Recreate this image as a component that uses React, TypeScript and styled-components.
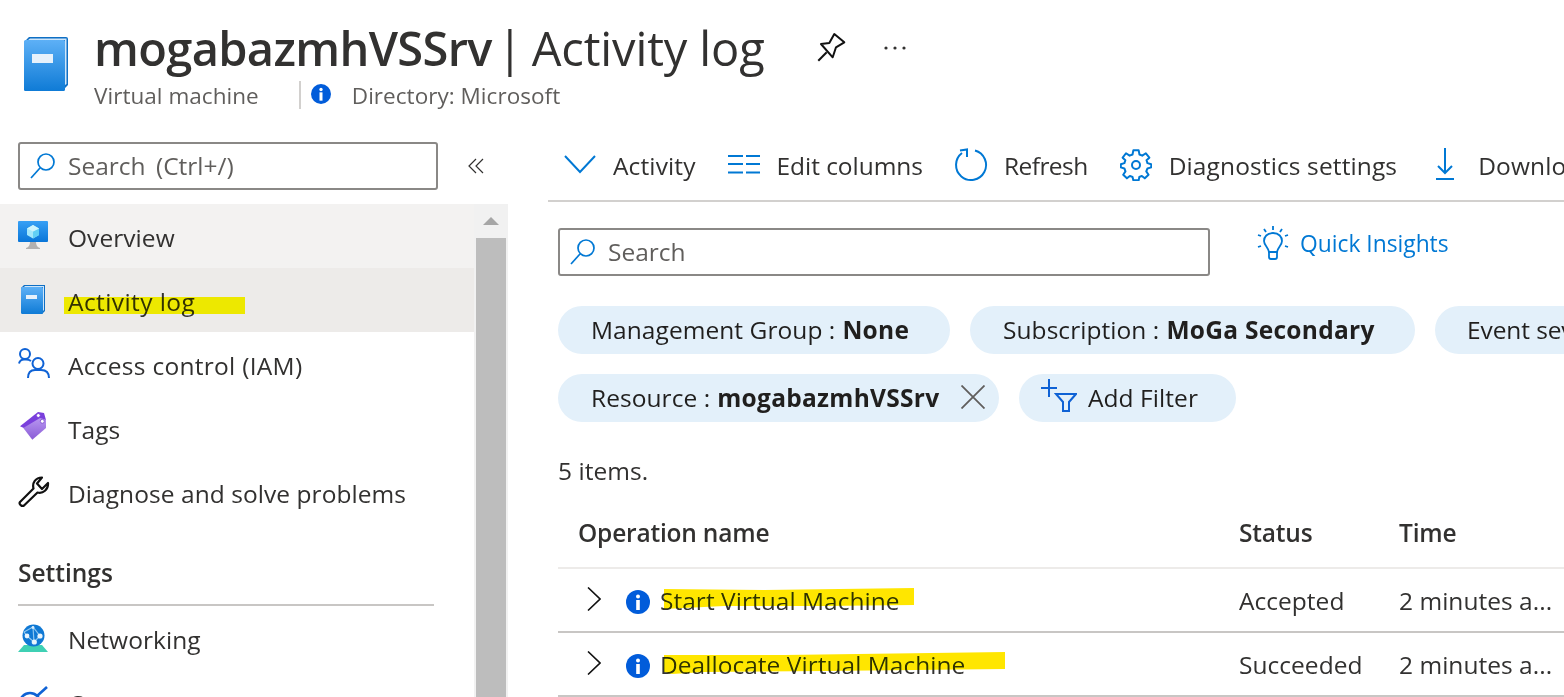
import React from "react";
import styled, { createGlobalStyle } from "styled-components";

const Global = createGlobalStyle`
  html, body { margin: 0; padding: 0; background: #fff; }
  body { font-family: "Open Sans", "Liberation Sans", sans-serif; color: #323130; }
  * { box-sizing: border-box; }
`;

const Page = styled.div`
  width: 1564px; height: 697px; overflow: hidden; background: #fff;
  display: flex; flex-direction: column;
`;
const Header = styled.header`
  height: 142px; flex: none; display: flex; align-items: flex-start;
  padding: 20px 0 0 24px;
`;
const HeaderIconWrap = styled.div`
  width: 44px; height: 54px; margin-top: 17px; flex: none;
`;
const HeaderText = styled.div`
  margin-left: 26px; display: flex; flex-direction: column;
`;
const TitleRow = styled.div`display: flex; align-items: center; height: 56px;`;
const Title = styled.h1`
  margin: 0; font-size: 47px; line-height: 56px; font-weight: 400; color: #323130;
  white-space: nowrap; letter-spacing: -0.12px;
  b { font-weight: 600; letter-spacing: -0.65px; }
`;
const TitleBar = styled.span`margin: 0 -3px 0 -7px;`;
const TitleIcons = styled.div`
  display: flex; align-items: center; margin-left: 53px; gap: 37px;
`;
const SubRow = styled.div`
  display: flex; align-items: center; height: 28px; margin-top: 5px;
  font-size: 22.5px; color: #605e5c; letter-spacing: 0.04px;
`;
const SubDivider = styled.span`
  width: 2px; height: 28px; background: #d2d0ce; margin: 0 10px 0 40px;
`;
const SubInfo = styled.span`
  display: flex; margin: -2px 21px 0 0;
`;
const Main = styled.div`display: flex; flex: 1; min-height: 0;`;
const Sidebar = styled.aside`
  width: 508px; flex: none; margin-right: 40px; display: flex; flex-direction: column;
`;
const SideTop = styled.div`
  height: 62px; flex: none; display: flex; padding-left: 18px;
`;
const SearchBox = styled.div<{ $w: number }>`
  width: ${p => p.$w}px; height: 48px; flex: none; border: 2px solid #8a8886; border-radius: 3px;
  display: flex; align-items: center; padding-left: 9px; gap: 13px;
  font-size: 24.5px; color: #605e5c; letter-spacing: 0;
  word-spacing: 4px;
`;
const SearchLabel = styled.span`margin-top: -2px;`;
const Collapse = styled.div`
  width: 20px; height: 48px; margin-left: 30px; display: flex; align-items: center;
`;
const SideBody = styled.div`display: flex; flex: 1; min-height: 0;`;
const NavList = styled.nav`width: 474px; flex: none; display: flex; flex-direction: column;`;
const NavItem = styled.div<{ $bg?: string }>`
  height: 64px; flex: none; display: flex; align-items: center; padding-left: 18px;
  background: ${p => p.$bg || "transparent"};
  font-size: 24.5px; color: #323130; white-space: nowrap;
`;
const NavIcon = styled.span`width: 32px; height: 32px; flex: none; margin-right: 18px; display: flex;`;
const NavLabel = styled.span<{ $ls?: number }>`
  margin-top: 2px; position: relative; letter-spacing: ${p => p.$ls ?? 0.06}px;
`;
const FlatMark = styled.span`
  position: absolute; left: -4px; top: 12px; width: 181px; height: 17px;
  background: #f0e800; mix-blend-mode: darken;
`;
const SectionTitle = styled.div`
  flex: none; margin: 24px 0 0 18px; width: 416px; height: 58px; border-bottom: 2px solid #c8c6c4;
  font-size: 24.5px; font-weight: 600; color: #323130; line-height: 50px;
`;
const ScrollTrack = styled.div`
  width: 34px; background: #f1f1f1; display: flex; flex-direction: column;
  padding: 0 2px;
`;
const ScrollArrow = styled.div`
  height: 34px; flex: none; display: flex; align-items: center; justify-content: center; padding-top: 2px;
`;
const ScrollThumb = styled.div`flex: 1; background: #bdbdbd;`;
const Content = styled.section`flex: 1; min-width: 0; overflow: hidden; display: flex; flex-direction: column;`;
const Toolbar = styled.div`
  height: 60px; flex: none; display: flex; align-items: flex-start; gap: 32px;
  border-bottom: 2px solid #d2d0ce; padding-left: 16px; white-space: nowrap; overflow: hidden;
`;
const ToolItem = styled.div<{ $ls?: number }>`
  display: flex; align-items: center; height: 48px; gap: 17px; flex: none; padding-bottom: 2px;
  font-size: 24.5px; color: #323130; letter-spacing: ${p => p.$ls ?? 0.12}px;
`;
const ToolIcon = styled.span`width: 32px; height: 32px; display: flex; flex: none;`;
const Inner = styled.div`padding-left: 10px; display: flex; flex-direction: column;`;
const SearchRow = styled.div`display: flex; margin-top: 26px; height: 48px;`;
const Insights = styled.div`
  display: flex; align-items: center; height: 36px; margin-top: -3px; margin-left: 47px; gap: 11px;
  color: #0078d4; font-size: 22.8px; white-space: nowrap;
`;
const PillRow = styled.div<{ $top: number }>`
  display: flex; gap: 20px; margin-top: ${p => p.$top}px; height: 48px;
`;
const Pill = styled.div<{ $w: number; $pad?: number; $ls?: number }>`
  width: ${p => p.$w}px; height: 48px; flex: none; border-radius: 24px; background: #e3f0fa;
  display: flex; align-items: center; padding: 0 0 2px ${p => p.$pad ?? 33}px;
  font-size: 24.5px; color: #201f1e; letter-spacing: ${p => p.$ls ?? 0.06}px; white-space: nowrap; overflow: hidden;
  b { font-weight: 700; margin-left: 7px; letter-spacing: 0.28px; }
`;
const PillClose = styled.span`display: flex; margin-left: auto; margin-right: 14px;`;
const PillIcon = styled.span`display: flex; margin-right: 11px; margin-bottom: 2px;`;
const Count = styled.div`
  margin-top: 32px; height: 34px; line-height: 34px; font-size: 24.5px; color: #323130; letter-spacing: 0.06px;
`;
const Table = styled.div`margin-top: 9px; display: flex; flex-direction: column;`;
const Row = styled.div<{ $h: number; $line: string }>`
  height: ${p => p.$h}px; flex: none; display: grid; grid-template-columns: 661px 160px 1fr;
  align-items: center; border-bottom: 2px solid ${p => p.$line}; padding-left: 20px;
  font-size: 24.5px; color: #323130; letter-spacing: 0.03px; white-space: nowrap;
`;
const HeadCell = styled.div`font-weight: 600; color: #323130; letter-spacing: -0.2px;`;
const OpCell = styled.div`display: flex; align-items: center;`;
const Caret = styled.span`display: flex; margin: -2px 0 0 9px; width: 39px;`;
const OpInfo = styled.span`display: flex; margin: 3px 10px 0 0;`;
const OpName = styled.span`position: relative; display: inline-block;`;
const StrokeMark = styled.svg`
  position: absolute; left: 4px; top: 4px; mix-blend-mode: darken; overflow: visible;
`;

const Book = () => (
  <svg width="44" height="54" viewBox="0 0 44 54">
    <defs>
      <linearGradient id="bk" x1="0" y1="0" x2="0" y2="1">
        <stop offset="0" stopColor="#5db0f6" /><stop offset="1" stopColor="#0f7bd6" />
      </linearGradient>
    </defs>
    <path d="M0 5 L5 0 H42 Q44 0 44 2 V48 L39 53 H2 Q0 54 0 52Z" fill="#0f6fc4" />
    <path d="M6 1.5 H42.5 V47 L41 48 V3 H4Z" fill="#cfe6fa" />
    <rect x="0" y="3" width="41" height="51" rx="1.5" fill="url(#bk)" />
    <rect x="8" y="17" width="21" height="9" fill="#e6f1fb" />
  </svg>
);
const Info = ({ s }: { s: number }) => (
  <svg width={s} height={s} viewBox="0 0 24 24">
    <circle cx="12" cy="12" r="12" fill="#015cda" />
    <circle cx="12" cy="6.6" r="2" fill="#fff" />
    <rect x="10.2" y="10" width="3.6" height="10" fill="#fff" />
  </svg>
);
const Magnifier = () => (
  <svg width="26" height="26" viewBox="0 0 26 26" fill="none" stroke="#0078d4" strokeWidth="1.7">
    <circle cx="17" cy="9" r="8" /><path d="M11 15 L2 25" />
  </svg>
);
const Pin = () => (
  <svg width="28" height="28" viewBox="0 0 28 28" fill="none" stroke="#111" strokeWidth="2" strokeLinejoin="round" overflow="visible">
    <path d="M3 10 L11.3 9 L16.3 0 L26.3 8.3 L18 13.3 L14.7 23.3Z" />
    <path d="M0.3 26.7 L8.7 18.3" />
  </svg>
);
const Dots = () => (
  <svg width="24" height="6" viewBox="0 0 24 6" fill="#323130">
    <circle cx="3" cy="3" r="1.6" /><circle cx="12" cy="3" r="1.6" /><circle cx="21" cy="3" r="1.6" />
  </svg>
);
const DoubleChevron = () => (
  <svg width="16" height="16" viewBox="0 0 16 16" fill="none" stroke="#323130" strokeWidth="1.2">
    <path d="M8 1 L1 8 L8 15 M15 1 L8 8 L15 15" />
  </svg>
);
const VmIcon = () => (
  <svg width="32" height="32" viewBox="0 0 32 32">
    <defs>
      <linearGradient id="vm" x1="0" y1="0" x2="0" y2="1">
        <stop offset="0" stopColor="#37a0f5" /><stop offset="1" stopColor="#0a76d8" />
      </linearGradient>
    </defs>
    <rect x="0" y="1" width="30" height="21" rx="1" fill="url(#vm)" />
    <path d="M8 28 Q12 27 12 22 H18 Q18 27 22 28 V29 H8Z" fill="#b3b1b0" />
    <path d="M15 5 L21 8.5 V15 L15 18.5 L9 15 V8.5Z" fill="#a5e8fb" />
    <path d="M15 11.5 L21 8.5 V15 L15 18.5Z" fill="#62d0f5" />
    <path d="M15 5 L21 8.5 L15 11.5 L9 8.5Z" fill="#cdf4fd" />
  </svg>
);
const SmallBook = () => (
  <svg width="32" height="32" viewBox="0 0 32 32">
    <defs>
      <linearGradient id="sb" x1="0" y1="0" x2="0" y2="1">
        <stop offset="0" stopColor="#5db0f6" /><stop offset="1" stopColor="#0f7bd6" />
      </linearGradient>
    </defs>
    <path d="M6 1 H27 V27 L24 30 H4 L3 4Z" fill="#0f6fc4" />
    <path d="M7 2 H26 V26 L25 27 V3 H6Z" fill="#cfe6fa" />
    <rect x="3" y="3" width="22" height="27" rx="1.5" fill="url(#sb)" />
    <rect x="8" y="11" width="11" height="4" fill="#e6f1fb" />
  </svg>
);
const People = () => (
  <svg width="32" height="32" viewBox="0 0 32 32" fill="none" stroke="#0f62d5" strokeWidth="2">
    <circle cx="7" cy="6" r="5" /><circle cx="20" cy="15.5" r="5.5" />
    <path d="M1 15.5 Q2 11.5 6 11.5 H8 Q11 11.5 13 13" />
    <path d="M10 30 Q10 22 17 22 H23 Q31 22 31 30" />
  </svg>
);
const Tag = () => (
  <svg width="32" height="32" viewBox="0 0 32 32">
    <defs>
      <linearGradient id="tg" x1="0" y1="0" x2="0" y2="1">
        <stop offset="0" stopColor="#b796f0" /><stop offset="1" stopColor="#8a5bd6" />
      </linearGradient>
    </defs>
    <path d="M2 14.3 L20 0 L26 1 L28 8 L8 17Z" fill="#7a3fdc" />
    <path d="M5.3 16 L22 6 L28 7.7 V16 L14.3 27.7Z" fill="url(#tg)" />
    <circle cx="20.3" cy="3.5" r="2" fill="#fff" stroke="#7a3fdc" />
    <circle cx="24.3" cy="9.3" r="2" fill="#fff" stroke="#8a5bd6" />
  </svg>
);
const Wrench = () => (
  <svg width="32" height="32" viewBox="0 0 32 32" fill="none" stroke="#111" strokeWidth="2.2" strokeLinejoin="round">
    <path d="M2 26 L15.5 12.5 C14 7 17.5 1.5 24 1.5 L19 7.5 L24 13 L30 7 C30.5 13.5 25 18 19.5 16.5 L6 29.5 C4 31 0.5 28 2 26Z" />
  </svg>
);
const Globe = () => (
  <svg width="32" height="32" viewBox="0 -2 32 32">
    <path d="M0 28 L6 21 H24 L30 28Z" fill="#3fd0b4" />
    <circle cx="15.5" cy="11.5" r="11" fill="#0f78d4" />
    <path d="M6 8 L15 3 L22 12 L16 18 L9 12Z M15 3 L16 18" fill="none" stroke="#8cc6f0" strokeWidth="1.2" />
    <circle cx="9" cy="12" r="2.4" fill="#e8f4fd" /><circle cx="22" cy="12" r="2.6" fill="#e8f4fd" />
    <circle cx="16.3" cy="18" r="2.6" fill="#e8f4fd" /><circle cx="15" cy="3.5" r="1.4" fill="#d7ecfb" />
  </svg>
);
const Connect = () => (
  <svg width="32" height="32" viewBox="0 0 32 32" fill="none" stroke="#0f62d5" strokeWidth="2.6">
    <circle cx="12" cy="17" r="10" /><path d="M19 10 L29 1" />
  </svg>
);
const ChevronDown = () => (
  <svg width="32" height="32" viewBox="0 0 32 32" fill="none" stroke="#0078d4" strokeWidth="2">
    <path d="M1 7 L16 23 L31 7" />
  </svg>
);
const Columns = () => (
  <svg width="32" height="32" viewBox="0 0 32 32" fill="none" stroke="#0078d4" strokeWidth="2">
    <path d="M0 7 H15 M0 15 H15 M0 23.5 H15 M18 7 H32 M18 15 H32 M18 23.5 H32" />
  </svg>
);
const Refresh = () => (
  <svg width="32" height="32" viewBox="0 0 32 32" fill="none" stroke="#0078d4" strokeWidth="2" overflow="visible">
    <path d="M20 1.5 A15 15 0 1 1 7 4" />
    <path d="M5 1.5 L12 0.5 V8" />
  </svg>
);
const Gear = () => (
  <svg width="32" height="32" viewBox="0 0 24 24" fill="none" stroke="#0078d4" strokeWidth="1.5" strokeLinejoin="round">
    <circle cx="12" cy="12" r="3" />
    <path d="M10 1 H14 L14.6 4.1 L16.7 5 L19.4 3.2 L22 6.5 L19.9 8.4 L20.6 10.6 L23.4 11.4 V13.8 L20.6 14.6 L19.7 16.8 L21.4 19.3 L18.6 22 L16.4 20.2 L14.5 21 L14 23.5 H10 L9.4 21 L7.4 20.2 L5.2 22 L2.4 19.3 L4.1 16.8 L3.3 14.6 L0.6 13.8 V11.4 L3.3 10.6 L4 8.4 L2 6.5 L4.5 3.2 L7.2 5 L9.4 4.1Z" />
  </svg>
);
const Download = () => (
  <svg width="32" height="32" viewBox="0 0 32 32" fill="none" stroke="#0078d4" strokeWidth="2" overflow="visible">
    <path d="M16 -1 V24 M9 17 L16 24 L23 17 M7 30 H25" />
  </svg>
);
const Bulb = () => (
  <svg width="32" height="34" viewBox="0 0 32 34" fill="none" stroke="#0078d4" strokeWidth="1.8">
    <path d="M16 7 C10 7 7 11 7 15 C7 19 11 21 12 26 H20 C21 21 25 19 25 15 C25 11 22 7 16 7Z" />
    <path d="M12 26 V31 Q12 33 14 33 H18 Q20 33 20 31 V26 M16 0 V4 M7 3 L9 6 M25 3 L23 6 M1 9 L4 10 M31 9 L28 10 M1 21 L4 20 M31 21 L28 20" />
  </svg>
);
const Close = () => (
  <svg width="24" height="24" viewBox="0 0 24 24" fill="none" stroke="#605e5c" strokeWidth="1.8">
    <path d="M0.5 0.5 L23.5 23.5 M23.5 0.5 L0.5 23.5" />
  </svg>
);
const AddFilter = () => (
  <svg width="36" height="34" viewBox="0 0 36 34" fill="none" stroke="#0f62d5" strokeWidth="2">
    <path d="M0 9 H16 M8 0 V18" />
    <path d="M15 15 H35 L28 23 V32 H22 V23Z" />
  </svg>
);
const CaretRight = () => (
  <svg width="14" height="24" viewBox="0 0 14 24" fill="none" stroke="#111" strokeWidth="1.6">
    <path d="M1 0.5 L13 12 L1 23.5" />
  </svg>
);
const UpArrow = () => (
  <svg width="16" height="10" viewBox="0 0 16 10"><path d="M8 0 L16 8 H0Z" fill="#a6a6a6" /></svg>
);

export default function App() {
  return (
    <>
      <Global />
      <Page>
        <Header>
          <HeaderIconWrap><Book /></HeaderIconWrap>
          <HeaderText>
            <TitleRow>
              <Title><b>mogabazmhVSSrv</b> <TitleBar>|</TitleBar> Activity log</Title>
              <TitleIcons><Pin /><Dots /></TitleIcons>
            </TitleRow>
            <SubRow>
              Virtual machine
              <SubDivider />
              <SubInfo><Info s={20} /></SubInfo>
              Directory: Microsoft
            </SubRow>
          </HeaderText>
        </Header>
        <Main>
          <Sidebar>
            <SideTop>
              <SearchBox $w={420}><Magnifier /><SearchLabel>Search (Ctrl+/)</SearchLabel></SearchBox>
              <Collapse><DoubleChevron /></Collapse>
            </SideTop>
            <SideBody>
              <NavList>
                <NavItem $bg="#f3f2f1"><NavIcon><VmIcon /></NavIcon><NavLabel>Overview</NavLabel></NavItem>
                <NavItem $bg="#edebe9">
                  <NavIcon><SmallBook /></NavIcon>
                  <NavLabel $ls={0.42}>Activity log<FlatMark /></NavLabel>
                </NavItem>
                <NavItem><NavIcon><People /></NavIcon><NavLabel $ls={0.28}>Access control (IAM)</NavLabel></NavItem>
                <NavItem><NavIcon><Tag /></NavIcon><NavLabel>Tags</NavLabel></NavItem>
                <NavItem><NavIcon><Wrench /></NavIcon><NavLabel>Diagnose and solve problems</NavLabel></NavItem>
                <SectionTitle>Settings</SectionTitle>
                <NavItem><NavIcon><Globe /></NavIcon><NavLabel>Networking</NavLabel></NavItem>
                <NavItem><NavIcon><Connect /></NavIcon><NavLabel>Connect</NavLabel></NavItem>
              </NavList>
              <ScrollTrack>
                <ScrollArrow><UpArrow /></ScrollArrow>
                <ScrollThumb />
              </ScrollTrack>
            </SideBody>
          </Sidebar>
          <Content>
            <Toolbar>
              <ToolItem><ToolIcon><ChevronDown /></ToolIcon>Activity</ToolItem>
              <ToolItem $ls={-0.05}><ToolIcon><Columns /></ToolIcon>Edit columns</ToolItem>
              <ToolItem $ls={-0.55}><ToolIcon><Refresh /></ToolIcon>Refresh</ToolItem>
              <ToolItem><ToolIcon><Gear /></ToolIcon>Diagnostics settings</ToolItem>
              <ToolItem><ToolIcon><Download /></ToolIcon>Download</ToolItem>
            </Toolbar>
            <Inner>
              <SearchRow>
                <SearchBox $w={652}><Magnifier /><SearchLabel>Search</SearchLabel></SearchBox>
                <Insights><Bulb />Quick Insights</Insights>
              </SearchRow>
              <PillRow $top={30}>
                <Pill $w={392}>Management Group : <b>None</b></Pill>
                <Pill $w={445}>Subscription : <b>MoGa Secondary</b></Pill>
                <Pill $w={300} $pad={32} $ls={-0.1}>Event severity</Pill>
              </PillRow>
              <PillRow $top={20}>
                <Pill $w={441}>Resource : <b>mogabazmhVSSrv</b><PillClose><Close /></PillClose></Pill>
                <Pill $w={217} $pad={22}><PillIcon><AddFilter /></PillIcon>Add Filter</Pill>
              </PillRow>
              <Count>5 items.</Count>
              <Table>
                <Row $h={72} $line="#edebe9">
                  <HeadCell>Operation name</HeadCell><HeadCell>Status</HeadCell><HeadCell>Time</HeadCell>
                </Row>
                <Row $h={64} $line="#c8c6c4">
                  <OpCell>
                    <Caret><CaretRight /></Caret><OpInfo><Info s={24} /></OpInfo>
                    <OpName>
                      <StrokeMark width="251" height="22" viewBox="0 0 251 22">
                        <polygon points="0,1 100,2 250,0 250,17 160,18 60,18 0,21" fill="#ffe600" />
                      </StrokeMark>
                      Start Virtual Machine
                    </OpName>
                  </OpCell>
                  <div>Accepted</div><div>2 minutes a...</div>
                </Row>
                <Row $h={64} $line="#c8c6c4">
                  <OpCell>
                    <Caret><CaretRight /></Caret><OpInfo><Info s={24} /></OpInfo>
                    <OpName>
                      <StrokeMark width="342" height="22" viewBox="0 0 342 22">
                        <polygon points="0,3 120,3 341,0 341,17 160,19 40,20 8,22 0,20" fill="#ffe600" />
                      </StrokeMark>
                      Deallocate Virtual Machine
                    </OpName>
                  </OpCell>
                  <div>Succeeded</div><div>2 minutes a...</div>
                </Row>
              </Table>
            </Inner>
          </Content>
        </Main>
      </Page>
    </>
  );
}
